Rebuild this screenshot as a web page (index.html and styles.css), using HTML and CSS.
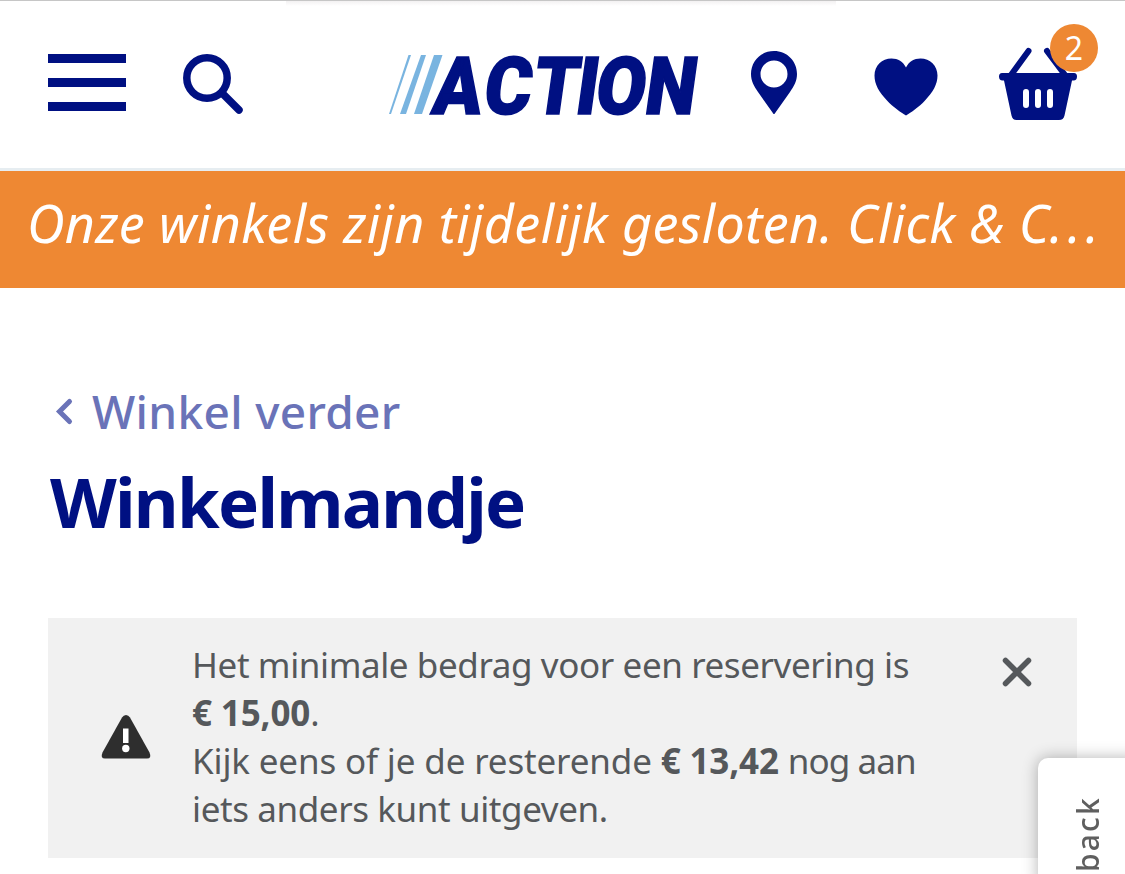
FILE: index.html
```
<!DOCTYPE html>
<html lang="nl">
<head>
    <meta charset="UTF-8">
    <meta name="viewport" content="width=device-width, initial-scale=1.0">
    <title>Winkelmandje</title>
    <link rel="stylesheet" href="styles.css">
</head>
<body>

<header class="header">
    <button class="menu-button" aria-label="Menu">
        <span></span>
        <span></span>
        <span></span>
    </button>
    <a href="#" class="search" aria-label="Zoeken">
        <svg width="62" height="62" viewBox="0 0 62 62">
            <circle cx="25" cy="25" r="20.2" />
            <path d="M40 40L57 57" />
        </svg>
    </a>
    <a href="#" class="logo">
        <svg width="312" height="62" viewBox="0 0 312 62">
            <g class="logo-stripes">
                <path d="M20.500 1H23L3 60H1z" />
                <path d="M33 1H38L18 60H12z" />
                <path d="M46 1H54.500L34 60H26z" />
            </g>
            <text class="logo-text" transform="translate(0 59.500) skewX(-8) scale(.9 1)" x="47 104 158 206 228 283" y="0">ACTION</text>
        </svg>
    </a>
    <a href="#" class="location" aria-label="Winkels">
        <svg width="46" height="64" viewBox="0 0 46 64">
            <path fill-rule="evenodd" d="M23 0C10 0 0 10 0 23C0 30 3 35 7 41L21.500 61.500Q23 64.500 24.500 61.500L39 41C43 35 46 30 46 23C46 10 36 0 23 0zM23 9.500A13.500 13.500 0 1 1 23 36.500A13.500 13.500 0 1 1 23 9.500z" />
        </svg>
    </a>
    <a href="#" class="favorites" aria-label="Favorieten">
        <svg width="64" height="58" viewBox="0 0 64 58">
            <path d="M32 57.500C27 54.500 19 49 13 42.500C5 34 .5 26.500 .5 17.500C.5 7.500 8 .5 17.500 .5C24 .5 29 3.500 32 9.500C35 3.500 40 .5 46.500 .5C56 .5 63.500 7.500 63.500 17.500C63.500 26.500 59 34 51 42.500C45 49 37 54.500 32 57.500z" />
        </svg>
    </a>
    <a href="#" class="basket" aria-label="Winkelmandje">
        <svg width="78" height="73" viewBox="0 0 78 73">
            <path class="handle" d="M29.500 4L12 28M48 4L66 28" />
            <path d="M3 26H75Q78 26 78 29.500Q78 33.500 74.500 33.500H73L65.500 68.500Q64.500 73 60 73H17.500Q13.500 73 12.500 68.500L5 33.500H3.500Q0 33.500 0 29.500Q0 26 3 26z" />
            <path class="bars" d="M27 45V58M39 45V58M51 45V58" />
        </svg>
        <span class="badge">2</span>
    </a>
</header>

<div class="banner">Onze winkels zijn tijdelijk gesloten. Click &amp; C<span class="dots">...</span></div>

<main class="container">
    <a href="#" class="back-link">
        <svg width="18" height="28" viewBox="0 0 18 28">
            <path d="M14.500 4.500L4.500 14.500L14.500 24.500" />
        </svg>
        Winkel verder
    </a>
    <h1>Winkelmandje</h1>

    <div class="alert">
        <svg class="warning" width="50" height="46" viewBox="0 0 50 46">
            <path d="M25 1Q27.500 1 29 3.500L48.500 38.500Q51 44.500 46 44.500H4Q-1 44.500 1.500 38.500L21 3.500Q22.500 1 25 1z" />
            <rect x="22" y="14.500" width="5.500" height="14.500" />
            <circle cx="24.800" cy="34.500" r="3.700" />
        </svg>
        <p class="alert-text">
            <span class="tight">Het minimale bedrag voor een reservering is</span><br>
            <strong>€ 15,00</strong>.<br>
            Kijk eens of je de resterende <strong>€ 13,42</strong> <span class="tighter">nog aan</span><br>
            <span class="tight">iets anders kunt uitgeven.</span>
        </p>
        <button class="close" aria-label="Sluiten">
            <svg width="30" height="30" viewBox="0 0 30 30">
                <path d="M3.500 3.500L26.500 26.500M26.500 3.500L3.500 26.500" />
            </svg>
        </button>
    </div>
</main>

<a href="#" class="feedback"><span>back</span></a>

</body>
</html>
```
FILE: styles.css
```
* {
    box-sizing: border-box;
}
body {
    font-family: "Noto Sans", sans-serif;
    background-color: #fff;
    margin: 0;
    padding: 0;
    height: 874px;
    overflow: hidden;
}
button {
    background: none;
    border: none;
    padding: 0;
}
a {
    text-decoration: none;
}
svg {
    display: block;
    overflow: visible;
}
.header {
    display: flex;
    align-items: flex-start;
    height: 171px;
    padding: 0 48px;
    border-top: 1px solid #c6c6c6;
    border-bottom: 3px solid #e6edf1;
    fill: #001082;
    background: linear-gradient(#f3f1f2, #fff) no-repeat 286px 0 / 550px 5px;
}
.menu-button {
    display: flex;
    flex-direction: column;
    gap: 15px;
    width: 78px;
    margin-top: 53px;
}
.menu-button span {
    height: 9px;
    background-color: #001082;
}
.search {
    margin: 52px 0 0 56px;
}
.search svg {
    fill: none;
    stroke: #001082;
    stroke-width: 7.5;
    stroke-linecap: round;
}
.logo {
    margin: 53px 0 0 144px;
}
.logo-stripes {
    fill: #79b4e0;
}
.logo-text {
    font: 900 80px Roboto, sans-serif;
    stroke: #001082;
    stroke-width: 1.6;
}
.location {
    margin: 50px 0 0 51px;
}
.favorites {
    margin: 57px 0 0 77px;
}
.basket {
    position: relative;
    margin: 46px 0 0 61px;
}
.handle,
.bars {
    fill: none;
    stroke: #001082;
    stroke-width: 6;
    stroke-linecap: round;
}
.bars {
    stroke: #fff;
}
.badge {
    position: absolute;
    top: -23px;
    left: 51px;
    width: 48px;
    height: 48px;
    border-radius: 50%;
    background-color: #ee8833;
    color: #fff;
    font-size: 32px;
    line-height: 48px;
    text-align: center;
}
.banner {
    height: 117px;
    padding-left: 27px;
    background-color: #ee8833;
    color: #fff;
    font-size: 52px;
    font-style: italic;
    line-height: 104px;
    letter-spacing: 0.37px;
    white-space: nowrap;
}
.dots {
    letter-spacing: 4.6px;
}
.container {
    padding: 93px 48px 0;
}
.back-link {
    display: flex;
    align-items: center;
    gap: 19px;
    padding-left: 7px;
    color: #6a73b8;
    font-size: 46px;
    font-weight: 500;
    line-height: 60px;
    letter-spacing: 0.3px;
}
.back-link svg {
    fill: none;
    stroke: #6a73b8;
    stroke-width: 5;
    stroke-linecap: round;
}
h1 {
    margin: 18px 0 75px;
    padding-left: 2px;
    color: #001082;
    font-size: 69px;
    font-weight: 700;
    line-height: 84px;
    letter-spacing: -1.75px;
}
.alert {
    display: flex;
    align-items: flex-start;
    height: 240px;
    padding: 23px 45px 0 53px;
    background-color: #f1f1f1;
}
.warning {
    margin-top: 73px;
    fill: #2e2e2e;
}
.warning rect,
.warning circle {
    fill: #fff;
}
.alert-text {
    flex: 1;
    margin: 0 0 0 41px;
    color: #55585b;
    font-size: 35px;
    line-height: 48px;
    letter-spacing: -0.15px;
    white-space: nowrap;
}
.tight {
    letter-spacing: -0.4px;
}
.tighter {
    letter-spacing: -0.9px;
}
.close {
    margin-top: 16px;
}
.close path {
    stroke: #55585b;
    stroke-width: 5.5;
    stroke-linecap: round;
}
.feedback {
    position: fixed;
    top: 758px;
    left: 1038px;
    width: 100px;
    height: 130px;
    padding: 38px 0 0 30px;
    border-radius: 10px 0 0 10px;
    background-color: #fff;
    box-shadow: 0 0 16px rgba(0, 0, 0, 0.3);
    color: #5f5f5f;
    font-size: 30px;
    font-weight: 500;
    line-height: 40px;
    letter-spacing: 2.2px;
}
.feedback span {
    display: inline-block;
    writing-mode: vertical-rl;
    transform: rotate(180deg);
}
```
